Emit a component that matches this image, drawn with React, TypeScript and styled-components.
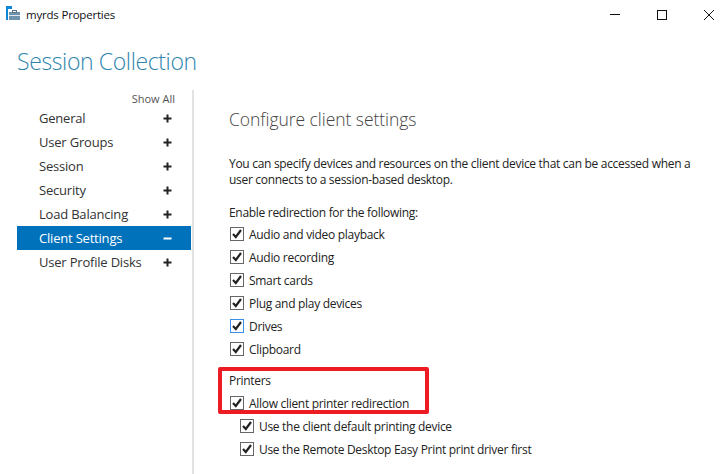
import React from "react";
import styled, { createGlobalStyle } from "styled-components";

const Global = createGlobalStyle`
  html, body { margin: 0; padding: 0; background: #fff; }
  body { font-family: "Open Sans", "Liberation Sans", sans-serif; font-size: 12px; color: #222; overflow: hidden; }
`;

const Window = styled.div`
  position: relative;
  width: 726px;
  height: 474px;
  overflow: hidden;
  background: #fff;
`;

const TitleBar = styled.header`
  display: flex;
  align-items: center;
  height: 30px;
  padding-left: 6px;
`;

const IconSlot = styled.span`
  display: flex;
  width: 16px;
  height: 16px;
  margin-top: -2px;
`;

const TitleText = styled.span`
  margin-left: 4px;
  margin-top: -2px;
  font-size: 11.5px;
  letter-spacing: -0.2px;
  color: #111;
`;

const WindowButtons = styled.div`
  display: flex;
  gap: 37px;
  margin-left: auto;
  margin-right: 12px;
`;

const WindowButton = styled.div`
  width: 10px;
  height: 30px;
  display: flex;
  align-items: center;
  justify-content: center;
`;

const Heading = styled.h1`
  margin: 0;
  padding: 16px 0 0 17px;
  height: 44px;
  box-sizing: content-box;
  font-size: 23px;
  line-height: 30px;
  font-weight: 300;
  letter-spacing: -0.38px;
  color: #2f85ae;
`;

const Body = styled.div`
  display: flex;
  height: 384px;
`;

const Sidebar = styled.nav`
  width: 174px;
  margin-left: 17px;
  flex: none;
`;

const ShowAll = styled.div`
  height: 15px;
  line-height: 16px;
  margin-top: 1px;
  padding-right: 16px;
  text-align: right;
  font-size: 11px;
  letter-spacing: 0;
  color: #555;
`;

const NavRow = styled.div<{ $active?: boolean }>`
  display: flex;
  align-items: center;
  justify-content: space-between;
  height: 24px;
  padding: 0 19px 0 22px;
  font-size: 13px;
  letter-spacing: -0.2px;
  background: ${(p) => (p.$active ? "#0072bc" : "transparent")};
  color: ${(p) => (p.$active ? "#fff" : "#333")};
`;

const Divider = styled.div`
  width: 2px;
  flex: none;
  margin-left: 1px;
  background: #e2e2e2;
`;

const Content = styled.main`
  flex: 1;
  padding-left: 35px;
`;

const SectionTitle = styled.h2`
  margin: 0;
  padding-top: 16px;
  height: 29px;
  box-sizing: content-box;
  font-size: 17.5px;
  line-height: 26px;
  font-weight: 300;
  letter-spacing: -0.05px;
  color: #444;
`;

const Description = styled.p`
  margin: 21px 0 0;
  width: 480px;
  line-height: 16px;
  letter-spacing: -0.3px;
  color: #222;
`;

const GroupLabel = styled.div<{ $top: number }>`
  margin-top: ${(p) => p.$top}px;
  height: 16px;
  line-height: 16px;
  letter-spacing: -0.3px;
  color: #222;
`;

const CheckList = styled.div<{ $indent?: number; $top: number }>`
  display: flex;
  flex-direction: column;
  gap: 7px;
  margin-top: ${(p) => p.$top}px;
  margin-left: ${(p) => p.$indent ?? 0}px;
`;

const CheckRow = styled.div`
  display: flex;
  align-items: center;
  height: 16px;
  gap: 5px;
  letter-spacing: -0.3px;
  color: #222;
`;

const Box = styled.span<{ $focus?: boolean }>`
  width: 14px;
  height: 14px;
  flex: none;
  box-sizing: border-box;
  margin-left: 1px;
  border: 1px solid ${(p) => (p.$focus ? "#3b8fe8" : "#666")};
  display: flex;
  align-items: center;
  justify-content: center;
  background: #fff;
`;

const Highlight = styled.div`
  position: absolute;
  left: 218px;
  top: 367px;
  width: 211px;
  height: 47px;
  box-sizing: border-box;
  border: 4px solid #ed1c24;
  border-radius: 2px;
  pointer-events: none;
`;

const Tick = () => (
  <svg width="12" height="12" viewBox="0 0 12 12">
    <path d="M2 6 L4.8 9 L10 2" fill="none" stroke="#222" strokeWidth="2.2" />
  </svg>
);

const Check = ({ label, focus }: { label: string; focus?: boolean }) => (
  <CheckRow>
    <Box $focus={focus}><Tick /></Box>
    <span>{label}</span>
  </CheckRow>
);

const AppIcon = () => (
  <svg width="16" height="16" viewBox="0 0 16 16">
    <rect x="0" y="0" width="6" height="3" fill="#0f86d6" />
    <rect x="0" y="0" width="2" height="14" fill="#0f86d6" />
    <rect x="3" y="6" width="11" height="8" fill="#6f93ad" />
    <rect x="6.5" y="4.5" width="4" height="2" fill="none" stroke="#5b7389" />
    <rect x="3" y="9" width="11" height="1" fill="#dbe6ed" />
  </svg>
);

const PlusIcon = ({ minus, light }: { minus?: boolean; light?: boolean }) => (
  <svg width="9" height="9" viewBox="0 0 9 9">
    <rect x="0.5" y="3.5" width="8" height="2" fill={light ? "#fff" : "#222"} />
    {!minus && <rect x="3.5" y="0.5" width="2" height="8" fill="#222" />}
  </svg>
);

const nav = ["General", "User Groups", "Session", "Security", "Load Balancing", "Client Settings", "User Profile Disks"];
const items = ["Audio and video playback", "Audio recording", "Smart cards", "Plug and play devices", "Drives", "Clipboard"];

export default function App() {
  return (
    <Window>
      <Global />
      <TitleBar>
        <IconSlot><AppIcon /></IconSlot>
        <TitleText>myrds Properties</TitleText>
        <WindowButtons>
          <WindowButton>
            <svg width="10" height="10" viewBox="0 0 10 10"><rect x="0" y="4" width="10" height="1" fill="#111" /></svg>
          </WindowButton>
          <WindowButton>
            <svg width="10" height="10" viewBox="0 0 10 10"><rect x="0.5" y="0.5" width="9" height="9" fill="none" stroke="#111" /></svg>
          </WindowButton>
          <WindowButton>
            <svg width="10" height="10" viewBox="0 0 10 10"><path d="M0 0 L10 10 M10 0 L0 10" stroke="#111" strokeWidth="1" /></svg>
          </WindowButton>
        </WindowButtons>
      </TitleBar>
      <Heading>Session Collection</Heading>
      <Body>
        <Sidebar>
          <ShowAll>Show All</ShowAll>
          {nav.map((n) => {
            const active = n === "Client Settings";
            return (
              <NavRow key={n} $active={active}>
                <span>{n}</span>
                <PlusIcon minus={active} light={active} />
              </NavRow>
            );
          })}
        </Sidebar>
        <Divider />
        <Content>
          <SectionTitle>Configure client settings</SectionTitle>
          <Description>
            You can specify devices and resources on the client device that can be accessed when a user connects to a session-based desktop.
          </Description>
          <GroupLabel $top={17}>Enable redirection for the following:</GroupLabel>
          <CheckList $top={5}>
            {items.map((i) => (
              <Check key={i} label={i} focus={i === "Drives"} />
            ))}
          </CheckList>
          <GroupLabel $top={16}>Printers</GroupLabel>
          <CheckList $top={6}>
            <Check label="Allow client printer redirection" />
          </CheckList>
          <CheckList $top={7} $indent={10}>
            <Check label="Use the client default printing device" />
            <Check label="Use the Remote Desktop Easy Print print driver first" />
          </CheckList>
        </Content>
      </Body>
      <Highlight />
    </Window>
  );
}
